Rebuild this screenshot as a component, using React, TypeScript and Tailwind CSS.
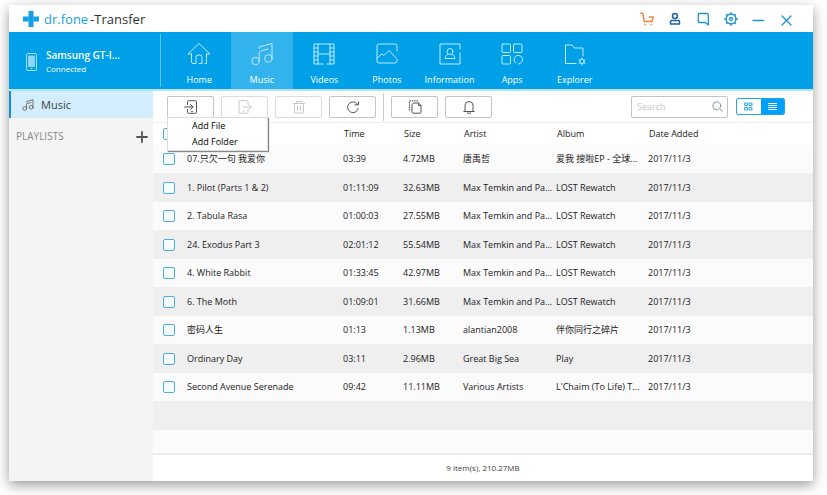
import type { ReactNode } from 'react';

type Track = { title: string; time: string; size: string; artist: string; album: string; date: string };

const tracks: Track[] = [
  { title: '07.只欠一句 我爱你', time: '03:39', size: '4.72MB', artist: '唐禹哲', album: '爱我 搜啦EP - 全球...', date: '2017/11/3' },
  { title: '1. Pilot (Parts 1 & 2)', time: '01:11:09', size: '32.63MB', artist: 'Max Temkin and Pa...', album: 'LOST Rewatch', date: '2017/11/3' },
  { title: '2. Tabula Rasa', time: '01:00:03', size: '27.55MB', artist: 'Max Temkin and Pa...', album: 'LOST Rewatch', date: '2017/11/3' },
  { title: '24. Exodus Part 3', time: '02:01:12', size: '55.54MB', artist: 'Max Temkin and Pa...', album: 'LOST Rewatch', date: '2017/11/3' },
  { title: '4. White Rabbit', time: '01:33:45', size: '42.97MB', artist: 'Max Temkin and Pa...', album: 'LOST Rewatch', date: '2017/11/3' },
  { title: '6. The Moth', time: '01:09:01', size: '31.66MB', artist: 'Max Temkin and Pa...', album: 'LOST Rewatch', date: '2017/11/3' },
  { title: '密码人生', time: '01:13', size: '1.13MB', artist: 'alantian2008', album: '伴你同行之碎片', date: '2017/11/3' },
  { title: 'Ordinary Day', time: '03:11', size: '2.96MB', artist: 'Great Big Sea', album: 'Play', date: '2017/11/3' },
  { title: 'Second Avenue Serenade', time: '09:42', size: '11.11MB', artist: 'Various Artists', album: "L'Chaim (To Life) T...", date: '2017/11/3' },
];

function Icon({ className, box = 24, width = 1, children }: { className?: string; box?: number; width?: number; children: ReactNode }) {
  return (
    <svg
      className={className}
      viewBox={`0 0 ${box} ${box}`}
      fill="none"
      stroke="currentColor"
      strokeWidth={width}
      strokeLinecap="round"
      strokeLinejoin="round"
      aria-hidden="true"
    >
      {children}
    </svg>
  );
}

const musicPaths = (
  <>
    <circle cx="5.5" cy="19" r="3.7" />
    <circle cx="18.3" cy="16.5" r="3.7" />
    <path d="M9.2 19V10M9.2 6.5V5L22 1.5v15M11 9l7-2" />
  </>
);

const sections: { label: string; icon: ReactNode }[] = [
  { label: 'Home', icon: <path d="M4.500 12v8q0 1.500 1.500 1.500h3V15q0-2 2-2h2q2 0 2 2v6.500h-3M18 21.500h1.500V12M4.500 12H1L12 1.500 23 12h-3.500" /> },
  { label: 'Music', icon: musicPaths },
  {
    label: 'Videos',
    icon: (
      <>
        <path d="M11 22H2V2h20v20h-7M6 2v20M18 2v20M6 12h12" />
        <path d="M2 6h4M2 10h4M2 14h4M2 18h4M18 6h4M18 10h4M18 14h4M18 18h4" />
      </>
    ),
  },
  { label: 'Photos', icon: <path d="M22 9V4q0-2-2-2H4Q2 2 2 4v15q0 2 2 2h16q2 0 2-2v-2M2 16l5-4 2 1.500 5-5 7 7.500" /> },
  {
    label: 'Information',
    icon: (
      <>
        <path d="M22 7V2H2v20h20V11" />
        <circle cx="12" cy="9.500" r="3" />
        <path d="M9.500 12.500Q7 14 7 16.500h10q0-2.500-2.500-4" />
      </>
    ),
  },
  {
    label: 'Apps',
    icon: (
      <>
        <rect x="2" y="2" width="8.500" height="8.500" rx="1" />
        <rect x="13.500" y="2" width="8.500" height="8.500" rx="1" />
        <rect x="2" y="13.500" width="8.500" height="8.500" rx="1" />
        <path d="M15.500 21a4.300 4.300 0 1 1 3 1" />
      </>
    ),
  },
  {
    label: 'Explorer',
    icon: (
      <>
        <path d="M13 21.500H2.500V3H9l2.500 3H20v8" />
        <circle cx="19" cy="19.500" r="2.200" />
        <path d="M19 16v1.300M19 21.700V23M16 17.700l1 .6M21 20.700l1 .6M16 21.300l1-.6M21 18.300l1-.6" />
      </>
    ),
  },
];

const columns = ['Time', 'Size', 'Artist', 'Album', 'Date Added'];

function ToolButton({ label, disabled, children }: { label: string; disabled?: boolean; children: ReactNode }) {
  return (
    <button
      type="button"
      aria-label={label}
      disabled={disabled}
      className="flex h-[22px] w-[47px] items-center justify-center rounded-xs border border-[#c4c4c4] bg-white text-[#555] disabled:border-[#dcdcdc] disabled:text-[#c8c8c8]"
    >
      <Icon className="size-[14px]" box={14}>{children}</Icon>
    </button>
  );
}

function Check({ label }: { label: string }) {
  return (
    <input
      type="checkbox"
      aria-label={label}
      className="block size-3 appearance-none rounded-xs border border-[#50aedd] bg-[#f5fbff] checked:bg-[#50aedd]"
    />
  );
}

function TitleBar() {
  return (
    <header className="flex h-[27px] shrink-0 items-center bg-white pr-[19px] pl-[14px]">
      <svg className="size-4" viewBox="0 0 16 16" aria-hidden="true">
        <path d="M5.500 0h5v5.500H16v5h-5.500V16h-5v-5.500H0v-5h5.500z" fill="#13a0e6" />
        <path d="M5.500 5.500v5M10.500 5.500v5" stroke="#55bdef" strokeWidth=".6" />
      </svg>
      <h1 className="flex items-center gap-[2px] pl-[5px] text-[13px] leading-4 text-[#333]">
        <span className="font-medium text-[#1a9fe0]">dr.fone</span>
        <span className="font-medium">-Transfer</span>
      </h1>
      <div className="ml-auto flex items-center gap-[14px] text-[#1c93d6]">
        <button type="button" aria-label="Store" className="text-[#f58233]">
          <Icon className="size-[14px]" box={14} width={1.4}>
            <path d="M.8 1.300h2L4.300 9.500H12L13.200 5H9.500" />
            <path d="M5 12.500h.1M11.300 12.500h.1" strokeWidth="1.600" />
          </Icon>
        </button>
        <button type="button" aria-label="Account" className="text-[#245fa6]">
          <Icon className="size-[14px]" box={14} width={1.5}>
            <circle cx="7" cy="4" r="2.500" />
            <path d="M2.500 12V9.800q0-1.300 1.300-1.300h6.400q1.300 0 1.300 1.300V12z" />
          </Icon>
        </button>
        <button type="button" aria-label="Feedback">
          <Icon className="size-[14px]" box={14} width={1.3}>
            <path d="M12.300 13V2.500q0-1-1-1h-8q-1 0-1 1v7q0 1 1 1h6z" />
          </Icon>
        </button>
        <button type="button" aria-label="Settings">
          <Icon className="size-[14px]" box={14} width={1.3}>
            <circle cx="7" cy="7" r="5" />
            <circle cx="7" cy="7" r="1.500" />
            <path d="M7 .7V2M7 12v1.300M.7 7H2M12 7h1.300M2.500 2.500l1 1M10.500 10.500l1 1M2.500 11.500l1-1M10.500 3.500l1-1" />
          </Icon>
        </button>
        <button type="button" aria-label="Minimize">
          <Icon className="size-[14px]" box={14} width={1.3}>
            <path d="M1 8.500h10.500" />
          </Icon>
        </button>
        <button type="button" aria-label="Close">
          <Icon className="size-[14px]" box={14} width={1.3}>
            <path d="M2 4l9 9M11 4l-9 9" />
          </Icon>
        </button>
      </div>
    </header>
  );
}

function DeviceBar() {
  return (
    <div className="flex h-[59px] shrink-0 border-b-2 border-[#b5e3fb] bg-[#00a0e9] text-white">
      <div className="my-[2px] flex w-[152px] shrink-0 items-center gap-[9px] border-r border-[#5fc4f1] pt-[2px] pl-[17px]">
        <svg className="h-[18px] w-[11px]" viewBox="0 0 11 18" fill="none" stroke="#a6def8" aria-hidden="true">
          <rect x=".5" y=".5" width="10" height="17" rx="1.500" />
          <rect x="2.500" y="3" width="6" height="10.500" fill="#8fd6f7" strokeWidth=".7" />
          <path d="M4.500 15.700h2" />
        </svg>
        <div className="min-w-0">
          <p className="truncate text-[10px] leading-[13px] font-semibold">Samsung GT-I...</p>
          <p className="text-[8px] leading-[13px]">Connected</p>
        </div>
      </div>
      <nav className="ml-[7px] grid w-[438px] grid-cols-7">
        {sections.map((section) => (
          <a
            key={section.label}
            href="#"
            aria-current={section.label === 'Music' ? 'page' : undefined}
            className="flex flex-col items-center gap-[7px] pt-[10px] text-[9px] leading-[14px] aria-[current=page]:bg-[#33b3ed]"
          >
            <Icon className="size-6 text-[#c2eafd]">{section.icon}</Icon>
            {section.label}
          </a>
        ))}
      </nav>
    </div>
  );
}

function Sidebar() {
  return (
    <aside className="w-36 shrink-0 bg-[#f4f4f4]">
      <a href="#" className="flex h-[27px] items-center gap-[7px] border-l-2 border-[#1590dd] bg-[#d2edfd] pt-px pl-[11px] text-[11px] text-[#444]">
        <Icon className="size-3 text-[#666]" width={1.8}>{musicPaths}</Icon>
        Music
      </a>
      <div className="flex h-[37px] items-center justify-between pr-[5px] pl-[7px]">
        <h2 className="text-[10px] text-[#888]">PLAYLISTS</h2>
        <button type="button" aria-label="Add playlist" className="text-[#555]">
          <Icon className="size-3" box={12} width={1.8}>
            <path d="M6 1v10M1 6h10" />
          </Icon>
        </button>
      </div>
    </aside>
  );
}

function Toolbar() {
  return (
    <div className="flex h-8 shrink-0 items-center justify-between border-b border-[#eee] pr-7 pl-[14px]">
      <div className="flex items-center gap-[7px]">
        <div className="relative">
          <ToolButton label="Add">
            <path d="M3.500 4.500v-3q0-.8.800-.8h7.400q.8 0 .8.800v11q0 .8-.8.800H4.300q-.8 0-.8-.8v-3M.5 7H9M6.500 4.500L9 7 6.500 9.500M7.500 11.500h1" />
          </ToolButton>
          <div className="absolute top-[21px] left-0 z-10 flex w-[101px] flex-col border border-[#ddd] bg-white text-[9px] leading-4 text-black shadow-[1px_1px_1px_#888]">
            <button type="button" className="pl-6 text-left">Add File</button>
            <button type="button" className="pl-6 text-left">Add Folder</button>
          </div>
        </div>
        <ToolButton label="Export" disabled>
          <path d="M10 4.500v-3q0-.8-.8-.8H1.800Q1 .7 1 1.500v11q0 .8.800.800h7.400q.8 0 .8-.8v-3M5 7h8M11 4.700L13.300 7 11 9.300M5 11.500h1" />
        </ToolButton>
        <ToolButton label="Delete" disabled>
          <path d="M1.500 3.500h11M4.500 3.500v-2h5v2M2.500 3.500v9.500h9V3.500M5.500 6v4.500M8.500 6v4.500" />
        </ToolButton>
        <ToolButton label="Refresh">
          <path d="M11.500 4.200A5.400 5.400 0 1 0 12.300 8.500M12.500 1.800v3H9" />
        </ToolButton>
        <div className="h-7 w-px bg-[#ccc]" />
        <ToolButton label="Duplicate files">
          <path d="M6 3h4.500l2.500 2.500v6.700q0 1-1 1H5q-1 0-1-1V5zM10.500 3v2.500H13" />
          <path d="M9.500 .8H1.500v10" strokeDasharray=".5 1.900" strokeWidth="1.300" />
        </ToolButton>
        <ToolButton label="Ringtone maker">
          <path d="M1.800 11.500h10.400M3 11.300V5.500a4 4 0 0 1 8 0v5.800M5.300 13q1.700 1 3.400 0" />
        </ToolButton>
      </div>
      <div className="flex items-center gap-2">
        <label className="flex h-[22px] w-[97px] items-center rounded-xs border border-[#c4c4c4] pr-1 pl-[5px]">
          <input type="search" aria-label="Search" placeholder="Search" className="w-0 min-w-0 flex-1 bg-transparent text-[9px] text-[#555] outline-none placeholder:text-[#c8c8c8]" />
          <Icon className="size-[11px] text-[#8497a4]" box={11}>
            <circle cx="4.800" cy="4.800" r="4" />
            <path d="M7.800 7.800l2.500 2.500" />
          </Icon>
        </label>
        <div className="flex h-[17px] w-[49px] overflow-hidden rounded-xs border border-[#22a4ee]">
          <button type="button" aria-label="Grid view" className="flex flex-1 items-center justify-center bg-white text-[#2ba4e9]">
            <Icon className="size-[9px]" box={9}>
              <path d="M1 1h2.500v2.500H1zM5.500 1H8v2.500H5.500zM1 5.500h2.500V8H1zM5.500 5.500H8V8H5.500z" />
            </Icon>
          </button>
          <button type="button" aria-label="List view" aria-pressed="true" className="flex flex-1 items-center justify-center bg-[#00a0fa] text-white">
            <Icon className="size-[9px]" box={9}>
              <path d="M.5 1.500h8M.5 3.500h8M.5 5.500h8M.5 7.500h8" />
            </Icon>
          </button>
        </div>
      </div>
    </div>
  );
}

function TrackTable() {
  return (
    <table className="w-full shrink-0 table-fixed border-collapse text-left text-[9px] leading-[14px] whitespace-nowrap text-[#222]">
      <colgroup>
        <col className="w-[34px]" />
        <col className="w-[156px]" />
        <col className="w-[60px]" />
        <col className="w-[60px]" />
        <col className="w-[93px]" />
        <col className="w-[92px]" />
        <col />
      </colgroup>
      <thead>
        <tr className="h-[22px]">
          <th className="pl-[10px]"><Check label="Select all" /></th>
          <th aria-label="Name" />
          {columns.map((name) => (
            <th key={name} className="pl-px font-normal">{name}</th>
          ))}
        </tr>
      </thead>
      <tbody className="[&>tr]:h-[28px] [&>tr]:bg-[#fbfbfb] [&>tr:nth-child(even)]:h-[29px] [&>tr:nth-child(even)]:bg-[#efefef]">
        {tracks.map((track) => (
          <tr key={track.title}>
            <td className="pl-[10px]"><Check label={track.title} /></td>
            <td>{track.title}</td>
            <td>{track.time}</td>
            <td>{track.size}</td>
            <td>{track.artist}</td>
            <td>{track.album}</td>
            <td>{track.date}</td>
          </tr>
        ))}
        <tr><td colSpan={7} /></tr>
      </tbody>
    </table>
  );
}

export default function App() {
  return (
    <div className="flex min-h-screen flex-col bg-white pt-[5px] pr-[14px] pb-[14px] pl-[9px] font-['Open_Sans','Noto_Sans_CJK_SC',sans-serif]">
      <div className="flex flex-1 flex-col shadow-[0_4px_12px_rgba(0,0,0,0.4)]">
        <TitleBar />
        <DeviceBar />
        <div className="flex flex-1">
          <Sidebar />
          <main className="flex min-w-0 flex-1 flex-col bg-[#fbfbfb]">
            <div className="bg-white">
              <Toolbar />
              <TrackTable />
            </div>
            <footer className="mt-auto flex h-7 shrink-0 items-center justify-center border-t-2 border-[#ececec] bg-white text-[8px] text-[#444]">
              9 item(s), 210.27MB
            </footer>
          </main>
        </div>
      </div>
    </div>
  );
}
